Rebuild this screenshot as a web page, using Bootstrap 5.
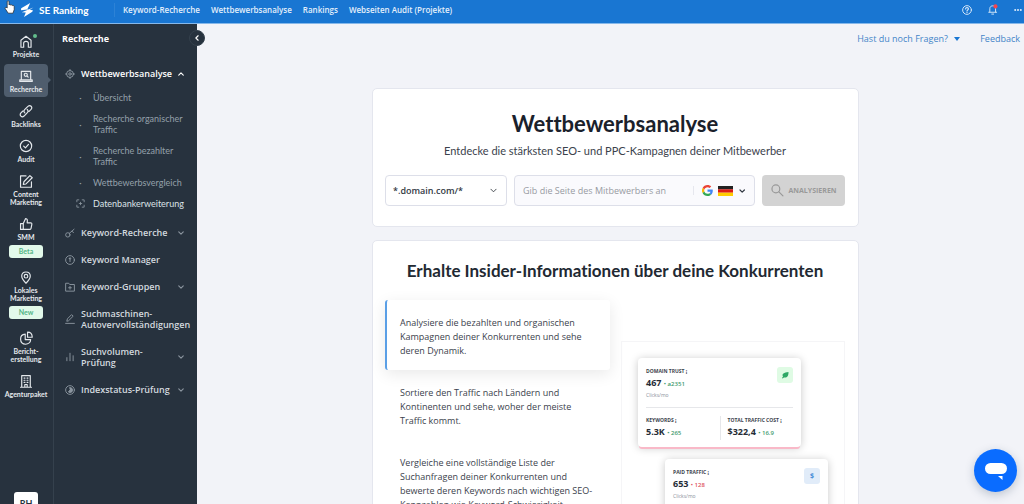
<!DOCTYPE html>
<html lang="de">
<head>
<meta charset="utf-8">
<meta name="viewport" content="width=device-width, initial-scale=1">
<title>Wettbewerbsanalyse – SE Ranking</title>
<link href="https://cdn.jsdelivr.net/npm/bootstrap@5.3.0/dist/css/bootstrap.min.css" rel="stylesheet">
<style>
  body { font-family: "Open Sans", Lato, sans-serif; font-size: 9px; line-height: 14px; color: #3b424c; background: #f2f3f8; }
  a { text-decoration: none; }
  svg { display: block; flex: none; }
  .ico { fill: none; stroke: currentColor; stroke-width: 1.5; stroke-linecap: round; stroke-linejoin: round; }

  .topbar { height: 24px; background: #1976d2; border-bottom: 1px solid #86b8ea; color: #fff; padding: 0 2px 4px 20px; }
  .brand { font-family: Lato, sans-serif; font-size: 10px; font-weight: 700; color: #fff; width: 94px; }
  .topbar .links { border-left: 1px solid #2c82d6; padding-left: 8px; gap: 11px; }
  .topbar .links a { color: #e3effb; font-size: 8px; font-weight: 600; }
  .topbar button { color: #dcebfa; }
  .plain { background: none; border: 0; padding: 0; color: inherit; font-size: inherit; line-height: inherit; }
  .hand { top: 0; left: 4px; z-index: 5; }

  .rail { width: 54px; background: #27323e; border-right: 1px solid #35414d; padding: 5px 5px 0 4px; gap: 2px; font-family: Lato, sans-serif; }
  .rail a { color: #e4e8ec; font-size: 7px; line-height: 8px; font-weight: 700; text-align: center; padding: 4px 0; border-radius: 4px; white-space: nowrap; }
  .rail svg { margin: 0 auto 1px; }
  .rail .current { background: #4f5d6d; }
  .rail .current::after { content: ""; position: absolute; right: -3px; top: 13px; border: 3px solid transparent; border-left-color: #4f5d6d; border-right: 0; }
  .rail .tagged { padding-bottom: 5px; }
  .tag { display: block; width: 34px; margin: 4px auto 0; background: #e2f9ea; color: #52b585; border-radius: 3px; line-height: 13px; }
  .dot { width: 4px; height: 4px; background: #62bd8c; top: 5px; right: 11px; }
  .avatar { width: 24px; height: 24px; background: #fff; color: #27323e; border-radius: 3px; font-size: 9px; font-weight: 700; left: 14px; bottom: -12px; line-height: 24px; }

  .panel { width: 143px; background: #27323e; color: #dde2e7; padding: 9px 8px 0; line-height: 11px; }
  .panel h2 { font-size: 9px; line-height: 12px; font-weight: 700; color: #fff; margin: 0 0 23px; }
  .panel a { color: #d3d9df; font-weight: 600; }
  .panel svg { color: #8b959f; }
  .panel .menu { gap: 16px; }
  .panel .menu > li > a { gap: 6px; padding-left: 3px; padding-right: 5px; }
  .panel .sub { gap: 10px; margin: 13px 0 2px; padding-left: 14px; font-family: Lato, sans-serif; }
  .panel .sub a { gap: 8px; font-weight: 400; color: #94a0aa; }
  .panel .sub .lit { color: #dde2e7; }
  .bullet { width: 9px; flex: none; text-align: center; }
  .fold { width: 16px; height: 16px; right: -8px; top: 6px; background: #27323e; color: #fff; border-radius: 50%; border: 1px solid #35414d; }

  .help { gap: 20px; padding: 8px 4px 0 0; }
  .help a, .help button { color: #4385c8; }
  .help .dropdown-toggle::after { border-width: 4px 3px 0; margin-left: 4px; vertical-align: 1px; color: #1976d2; }
  .column { max-width: 487px; margin: 42px auto 0; left: 5px; gap: 13px; }
  .sheet { background: #fff; border: 1px solid #e4e6ee; border-radius: 5px; padding: 0 13px 0 12px; }
  .sheet h1 { font-family: Lato, sans-serif; font-size: 22px; line-height: 26px; font-weight: 700; color: #1a212b; margin: 22px 0 7px; font-variant-ligatures: none; }
  .sheet h3 { font-family: Lato, sans-serif; font-size: 17px; line-height: 20px; font-weight: 700; color: #222932; margin: 20px -4px 19px; font-variant-ligatures: none; }
  .lead-in { font-family: Lato, sans-serif; font-size: 11px; margin: 0 0 17px; }
  .ask { gap: 7px; padding-bottom: 20px; }
  .ask .form-select { width: 122px; height: 31px; font-size: 9px; font-weight: 600; line-height: 14px; color: #333a44; border: 1px solid #dddfe9; border-radius: 4px; padding: 0 20px 0 7px; background-size: 7px 7px; background-position: right 9px center; }
  .site { height: 31px; border: 1px solid #dddfe9; border-radius: 4px; background: #fafafd; padding: 0 8px; }
  .site input { border: 0; background: none; padding: 0; font-size: 9px; color: #333a44; outline: 0; min-width: 0; }
  .site input::placeholder { color: #989ba2; }
  .site button { border-left: 1px solid #e6e7ee; padding-left: 8px; gap: 5px; height: 9px; color: #333a44; }
  .go { width: 83px; height: 31px; border: 0; border-radius: 4px; background: #d3d3d3; color: #999; font-size: 7px; font-weight: 700; gap: 5px; }

  .topics { width: 225px; }
  .topics li { padding: 16px 0 12px 15px; }
  .topics .chosen { padding-left: 13px; border-left: 2px solid #5a9fe6; border-radius: 3px; box-shadow: 0 4px 16px rgba(0,0,0,.09); background: #fff; }
  .preview { width: 224px; margin-top: 41px; border: 1px solid #f5f5f7; padding: 16px; }
  .tile { width: 163px; background: #fff; border-radius: 4px; padding: 9px 8px 7px; box-shadow: 0 1px 8px rgba(0,0,0,.22); line-height: 8px; }
  .tile.rose { box-shadow: 0 3px 0 -1px #f9b9c8, 0 1px 8px rgba(0,0,0,.22); }
  .tile h4 { font-size: 5px; line-height: 8px; font-weight: 700; margin: 0; color: #3c434d; }
  .tile strong { font-size: 9px; line-height: 16px; color: #252c36; }
  .tile small { font-size: 6px; font-weight: 600; }
  .tile .unit { font-size: 5px; line-height: 8px; color: #8a9099; }
  .up { color: #3d9a6c; } .down { color: #e0525c; }
  .chip { width: 16px; height: 16px; border-radius: 3px; }
  .leaf { background: #dffbe4; }
  .dollar { background: #e1ecf9; color: #4a8fd8; font-size: 7px; font-weight: 700; }
  .split { border-top: 1px solid #e6e7ea; margin-top: 8px; padding-top: 8px; }
  .split > div + div { border-left: 1px solid #e6e7ea; padding-left: 7px; }
  .shift { margin: 12px 0 0 27px; height: 90px; }
  .chat { right: 7px; bottom: 12px; width: 43px; height: 43px; border: 0; border-radius: 50%; background: #0a6cff; padding: 0; box-shadow: 0 3px 10px rgba(30,60,90,.25); }
</style>
</head>
<body class="vh-100 overflow-hidden d-flex flex-column">

<header class="topbar d-flex align-items-center flex-shrink-0">
  <svg class="hand position-absolute" width="12" height="14" viewBox="0 0 12 14"><path d="M3.200 8V1.800c0-1.400 1.800-1.400 1.800 0V5c.5-.8 1.600-.6 1.800.2.6-.6 1.500-.4 1.700.4.7-.4 1.700 0 1.700 1v3l-1.200 3.600H4.200L1.300 8.800c-.8-1.300.8-2 1.900-.8z" fill="#fff" stroke="#222" stroke-width=".7"/></svg>
  <a class="brand d-flex align-items-center" href="#">
    <svg class="me-1" width="15" height="16" viewBox="0 0 15 16"><path fill="#fff" d="M10.200 1 1.200 6.200 1 8.200l6.200-.6zM13.400 5.600 1.800 10.200l4 .4zM7.200 7.600 5.800 10.600 4 15l8.300-5.200.6-1.600z"/></svg>
    SE Ranking
  </a>
  <nav class="links d-flex">
    <a href="#">Keyword-Recherche</a><a href="#">Wettbewerbsanalyse</a><a href="#">Rankings</a><a href="#">Webseiten Audit (Projekte)</a>
  </nav>
  <div class="ms-auto d-flex align-items-center gap-3">
    <button class="plain" aria-label="Hilfe"><svg class="ico" width="10" height="10" viewBox="0 0 16 16"><circle cx="8" cy="8" r="7"/><path d="M5.800 6.300c0-3 4.500-2.700 4.400-.1C10.200 8 8 7.800 8 9.400M8 11.800v.2" stroke-width="1.800"/></svg></button>
    <button class="plain" aria-label="Meldungen"><svg width="10" height="11" viewBox="0 0 16 18"><path class="ico" d="M1 13.500h13M2.800 13V7.500c0-6 9.400-6 9.400 0V13M6 16.500h3"/><circle cx="12" cy="4" r="3.400" fill="#f4444e"/></svg></button>
    <button class="plain" aria-label="Mehr"><svg width="8" height="4" viewBox="0 0 8 4" fill="currentColor"><circle cx="1.200" cy="2" r="1"/><circle cx="4" cy="2" r="1"/><circle cx="6.800" cy="2" r="1"/></svg></button>
  </div>
</header>

<div class="d-flex flex-grow-1 position-relative" style="min-height:0">
  <nav class="rail d-flex flex-column flex-shrink-0 position-relative">
    <a class="position-relative" href="#"><span class="dot rounded-circle position-absolute"></span><svg class="ico" width="14" height="16" viewBox="0 0 18 20"><path d="M2.500 9 9 4l6.500 5v9H12v-5c0-3.500-6-3.500-6 0v5H2.500z"/></svg>Projekte</a>
    <a class="current position-relative" href="#"><svg class="ico" width="14" height="16" viewBox="0 0 18 20"><path d="M3 14V4h12v10M1 17h16v-2H1z"/><circle cx="8.700" cy="8.500" r="2"/><path d="m10.300 10 1.500 1.500"/></svg>Recherche</a>
    <a href="#"><svg class="ico" width="14" height="16" viewBox="0 0 18 20"><path d="M7.500 12.500c-2-2-1-3.500 0-4.500l4-4c3-2.500 6.500 1 4 4l-2.500 2.500M10.500 8c2 2 1 3.500 0 4.500l-4 4c-3 2.500-6.500-1-4-4L5 10"/></svg>Backlinks</a>
    <a href="#"><svg class="ico" width="14" height="16" viewBox="0 0 18 20"><circle cx="9" cy="10" r="7.300"/><path d="m6 10.200 2.300 2.300L12.200 8"/></svg>Audit</a>
    <a href="#"><svg class="ico" width="14" height="16" viewBox="0 0 18 20"><path d="M9 3.500H2V18h14v-7M5.500 14.500l.8-3.500L14 3l3 2.800-8 8z"/></svg>Content<br>Marketing</a>
    <a class="tagged" href="#"><svg class="ico" width="14" height="16" viewBox="0 0 18 20"><path d="M2 9.500h3.500V17H2zM5.500 9.500 8.500 3c2.500 0 2.500 2 2 5.500h4.500c1.200 0 1.700.8 1.500 2l-1 5c-.2 1-1 1.500-2 1.500h-8"/></svg>SMM<span class="tag">Beta</span></a>
    <a class="tagged" href="#"><svg class="ico" width="14" height="16" viewBox="0 0 18 20"><path d="M9 18C6 15 3.500 12 3.500 8.800c0-7 11-7 11 0C14.500 12 12 15 9 18z"/><circle cx="9" cy="9" r="2.300"/></svg>Lokales<br>Marketing<span class="tag">New</span></a>
    <a href="#"><svg class="ico" width="14" height="16" viewBox="0 0 18 20"><path d="M8 5c-8 .5-8 12.500.5 13 3.500 0 6.500-2.500 6.500-6H8zM11 2.500V9h6c0-4-2.500-6.500-6-6.500z"/></svg>Bericht-<br>erstellung</a>
    <a href="#"><svg class="ico" width="14" height="16" viewBox="0 0 18 20"><path d="M3.500 18V3h11v15M2 18h14M7.500 18v-3.500h3V18M6.500 6.300h1.200M10.300 6.300h1.200M6.500 9h1.200M10.300 9h1.200M6.500 11.700h1.200M10.300 11.700h1.200"/></svg>Agenturpaket</a>
    <div class="avatar position-absolute text-center">RH</div>
  </nav>

  <aside class="panel flex-shrink-0 position-relative">
    <h2>Recherche</h2>
    <button class="fold position-absolute d-flex align-items-center justify-content-center p-0" aria-label="Einklappen"><svg class="ico text-white" width="6" height="6" viewBox="0 0 8 8"><path d="M5.500 1 2.500 4l3 3"/></svg></button>
    <ul class="menu list-unstyled d-flex flex-column m-0">
      <li>
        <a class="d-flex align-items-center text-white" href="#"><svg class="ico" width="10" height="10" viewBox="0 0 16 16"><circle cx="8" cy="8" r="5.500"/><circle cx="8" cy="8" r="2"/><path d="M8 .8v2M8 13.200v2M.8 8h2M13.200 8h2"/></svg>Wettbewerbsanalyse<svg class="ico ms-auto text-white" width="6" height="6" viewBox="0 0 8 8"><path d="m1 5.500 3-3 3 3"/></svg></a>
        <ul class="sub list-unstyled d-flex flex-column">
          <li><a class="d-flex align-items-center" href="#"><span class="bullet">·</span>Übersicht</a></li>
          <li><a class="d-flex align-items-center" href="#"><span class="bullet">·</span><span>Recherche organischer<br>Traffic</span></a></li>
          <li><a class="d-flex align-items-center" href="#"><span class="bullet">·</span><span>Recherche bezahlter<br>Traffic</span></a></li>
          <li><a class="d-flex align-items-center" href="#"><span class="bullet">·</span>Wettbewerbsvergleich</a></li>
          <li><a class="lit d-flex align-items-center" href="#"><svg class="ico" width="9" height="9" viewBox="0 0 16 16"><path d="M1.500 5V1.500H5M11 1.500h3.500V5M14.500 11v3.500H11M5 14.500H1.500V11M8 5.800v4.400M5.800 8h4.400"/></svg>Datenbankerweiterung</a></li>
        </ul>
      </li>
      <li><a class="d-flex align-items-center" href="#"><svg class="ico" width="10" height="10" viewBox="0 0 16 16"><circle cx="4.500" cy="11" r="3.500"/><path d="M7 8.500 14.500 2M11 5l2.500 2.500"/></svg>Keyword-Recherche<svg class="ico ms-auto" width="6" height="6" viewBox="0 0 8 8"><path d="m1 2.500 3 3 3-3"/></svg></a></li>
      <li><a class="d-flex align-items-center" href="#"><svg class="ico" width="10" height="10" viewBox="0 0 16 16"><circle cx="8" cy="8" r="7"/><path d="M8 10.500v-4M6.800 5.500a1.200 1.200 0 1 1 2.400 0 1.200 1.200 0 1 1-2.400 0"/></svg>Keyword Manager</a></li>
      <li><a class="d-flex align-items-center" href="#"><svg class="ico" width="10" height="10" viewBox="0 0 16 16"><path d="M1 14V2h5l1.500 2H15v10zM8 7v4.500M5.800 9.200h4.400"/></svg>Keyword-Gruppen<svg class="ico ms-auto" width="6" height="6" viewBox="0 0 8 8"><path d="m1 2.500 3 3 3-3"/></svg></a></li>
      <li><a class="d-flex align-items-center" href="#"><svg class="ico" width="10" height="10" viewBox="0 0 16 16"><path d="m3 11 .8-3.200L10.500 1 13 3.500l-7 7zM1 15h14"/></svg><span>Suchmaschinen-<br>Autovervollständigungen</span></a></li>
      <li><a class="d-flex align-items-center" href="#"><svg class="ico" width="10" height="10" viewBox="0 0 16 16"><path d="M3 14V9M8 14V2M13 14V6"/></svg><span>Suchvolumen-<br>Prüfung</span><svg class="ico ms-auto" width="6" height="6" viewBox="0 0 8 8"><path d="m1 2.500 3 3 3-3"/></svg></a></li>
      <li><a class="d-flex align-items-center" href="#"><svg class="ico" width="10" height="10" viewBox="0 0 16 16"><circle cx="8" cy="8" r="7"/><path d="M8 4a4 4 0 0 1 0 8c-1 0-2-.5-2.500-1L8 8z" fill="currentColor"/></svg>Indexstatus-Prüfung<svg class="ico ms-auto" width="6" height="6" viewBox="0 0 8 8"><path d="m1 2.500 3 3 3-3"/></svg></a></li>
    </ul>
  </aside>

  <main class="flex-grow-1 overflow-hidden">
    <div class="help d-flex justify-content-end">
      <button class="plain dropdown-toggle">Hast du noch Fragen?&nbsp;</button>
      <a href="#">Feedback</a>
    </div>
    <div class="column d-flex flex-column position-relative">
      <section class="sheet">
        <h1 class="text-center">Wettbewerbsanalyse</h1>
        <p class="lead-in text-center">Entdecke die stärksten SEO- und PPC-Kampagnen deiner Mitbewerber</p>
        <form class="ask d-flex">
          <select class="form-select" aria-label="Suchbereich"><option>*.domain.com/*</option></select>
          <div class="site d-flex align-items-center flex-grow-1">
            <input class="flex-grow-1" type="text" aria-label="Seite des Mitbewerbers" placeholder="Gib die Seite des Mitbewerbers an">
            <button type="button" class="plain d-flex align-items-center" aria-label="Suchmaschine und Land">
              <svg width="11" height="11" viewBox="0 0 48 48"><path fill="#ea4335" d="M24 9.500c3.500 0 6.700 1.200 9.200 3.600l6.900-6.900C35.900 2.400 30.500 0 24 0 14.600 0 6.500 5.400 2.600 13.200l8 6.200C12.400 13.700 17.700 9.500 24 9.500z"/><path fill="#4285f4" d="M47 24.600c0-1.600-.2-3.100-.4-4.600H24v9h12.900c-.6 3-2.300 5.500-4.700 7.200l7.700 6C44.400 38 47 31.800 47 24.600z"/><path fill="#fbbc05" d="M10.500 28.600a14 14 0 0 1 0-9.200l-8-6.200a24 24 0 0 0 0 21.600z"/><path fill="#34a853" d="M24 48c6.500 0 11.900-2.100 15.900-5.800l-7.700-6c-2.200 1.500-4.900 2.300-8.200 2.300-6.300 0-11.600-4.200-13.500-9.900l-8 6.200C6.500 42.600 14.600 48 24 48z"/></svg>
              <svg width="15" height="10" viewBox="0 0 15 10"><path fill="#222" d="M0 0h15v3.400H0z"/><path fill="#dd1c14" d="M0 3.300h15v3.400H0z"/><path fill="#fc0" d="M0 6.700h15V10H0z"/></svg>
              <svg class="ico" width="8" height="8" viewBox="0 0 8 8"><path d="m2 3 2.200 2.200L6.400 3" stroke-width="1.200"/></svg>
            </button>
          </div>
          <button type="button" class="go d-flex align-items-center justify-content-center flex-shrink-0 p-0"><svg class="ico" width="13" height="13" viewBox="0 0 16 16"><circle cx="6" cy="6" r="4.800"/><path d="m9.700 9.700 5 5"/></svg>ANALYSIEREN</button>
        </form>
      </section>

      <section class="sheet">
        <h3 class="text-center">Erhalte Insider-Informationen über deine Konkurrenten</h3>
        <div class="d-flex justify-content-between align-items-start">
          <ul class="topics list-unstyled m-0">
            <li class="chosen">Analysiere die bezahlten und organischen<br>Kampagnen deiner Konkurrenten und sehe<br>deren Dynamik.</li>
            <li>Sortiere den Traffic nach Ländern und<br>Kontinenten und sehe, woher der meiste<br>Traffic kommt.</li>
            <li>Vergleiche eine vollständige Liste der<br>Suchanfragen deiner Konkurrenten und<br>bewerte deren Keywords nach wichtigen SEO-<br>Kennzahlen wie Keyword-Schwierigkeit</li>
          </ul>
          <div class="preview">
            <div class="tile rose">
              <div class="d-flex justify-content-between">
                <div><h4>DOMAIN TRUST ¡</h4><strong>467</strong> <small class="up">• a2351</small><div class="unit">Clicks/mo</div></div>
                <span class="chip leaf d-flex align-items-center justify-content-center"><svg width="8" height="8" viewBox="0 0 16 16"><path fill="#2fa866" d="M15 2c0 9-3 12-9 11l-3 2-1-1 2-3C1 6 6 3 15 2z"/></svg></span>
              </div>
              <div class="split d-flex">
                <div class="col-6"><h4>KEYWORDS ¡</h4><strong>5.3K</strong> <small class="up">• 265</small></div>
                <div class="col-6"><h4 class="text-nowrap">TOTAL TRAFFIC COST ¡</h4><strong>$322,4</strong> <small class="up">• 16.9</small></div>
              </div>
            </div>
            <div class="tile shift">
              <div class="d-flex justify-content-between">
                <div><h4>PAID TRAFFIC ¡</h4><strong>653</strong> <small class="down">• 128</small><div class="unit">Clicks/mo</div></div>
                <span class="chip dollar d-flex align-items-center justify-content-center">$</span>
              </div>
            </div>
          </div>
        </div>
      </section>
    </div>
  </main>
</div>

<button class="chat position-fixed d-flex align-items-center justify-content-center" aria-label="Chat"><svg width="24" height="20" viewBox="0 0 24 20"><rect x="1" y="2" width="22" height="11" rx="5.500" fill="#fff"/><path fill="#fff" d="M14 15h4.500v4z"/></svg></button>

<script src="https://cdn.jsdelivr.net/npm/bootstrap@5.3.0/dist/js/bootstrap.bundle.min.js"></script>
</body>
</html>
